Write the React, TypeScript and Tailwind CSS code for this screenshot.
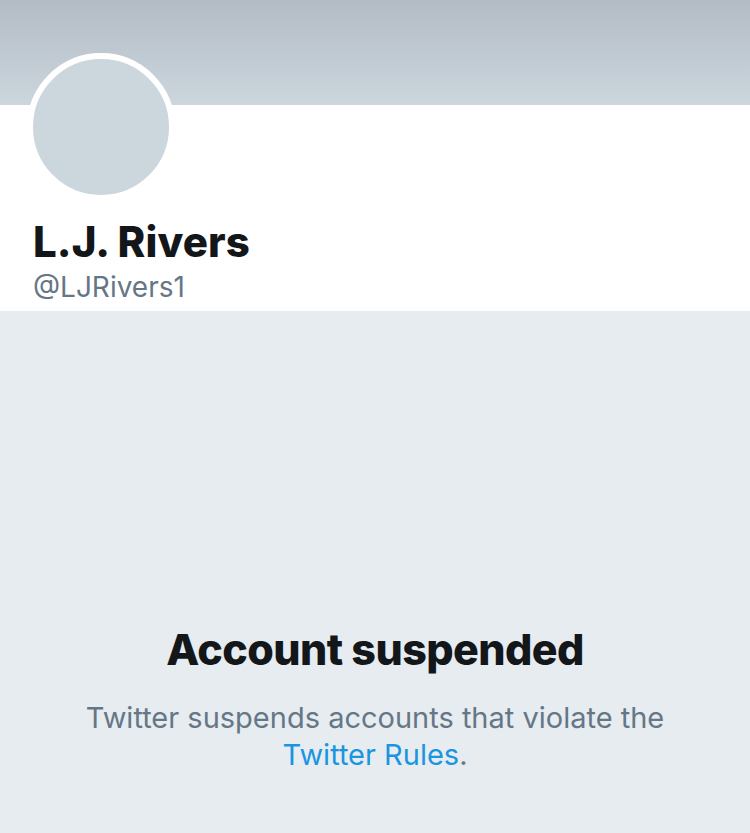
import React from "react";

export default function App() {
  return (
    <div className="w-[750px] h-[833px] flex flex-col font-['Inter','Noto_Sans',sans-serif] overflow-hidden">
      <div className="h-[105px] shrink-0 bg-gradient-to-b from-[#b3bcc5] to-[#ccd6dd]" />
      <div className="h-[206px] shrink-0 bg-white px-[27px]">
        <div className="w-[148px] h-[148px] -mt-[52px] rounded-full border-[6px] border-white bg-[#ccd6dd]" />
        <div className="mt-[20px] text-[42px] leading-[42px] font-extrabold text-[#14171a] tracking-[0.1px] pl-[6px]">
          L.J. Rivers
        </div>
        <div className="mt-[10px] text-[28px] leading-[28px] text-[#657786] pl-[6px]">
          @LJRivers1
        </div>
      </div>
      <div className="flex-1 bg-[#e6ecf0] flex flex-col items-center pt-[317px]">
        <div className="text-[43px] leading-[43px] font-extrabold text-[#14171a] tracking-[-0.6px]">
          Account suspended
        </div>
        <p className="mt-[28px] max-w-[640px] text-center text-[29px] leading-[37px] text-[#657786]">
          Twitter suspends accounts that violate the{" "}
          <span className="text-[#1b95e0]">Twitter Rules</span>.
        </p>
      </div>
    </div>
  );
}
